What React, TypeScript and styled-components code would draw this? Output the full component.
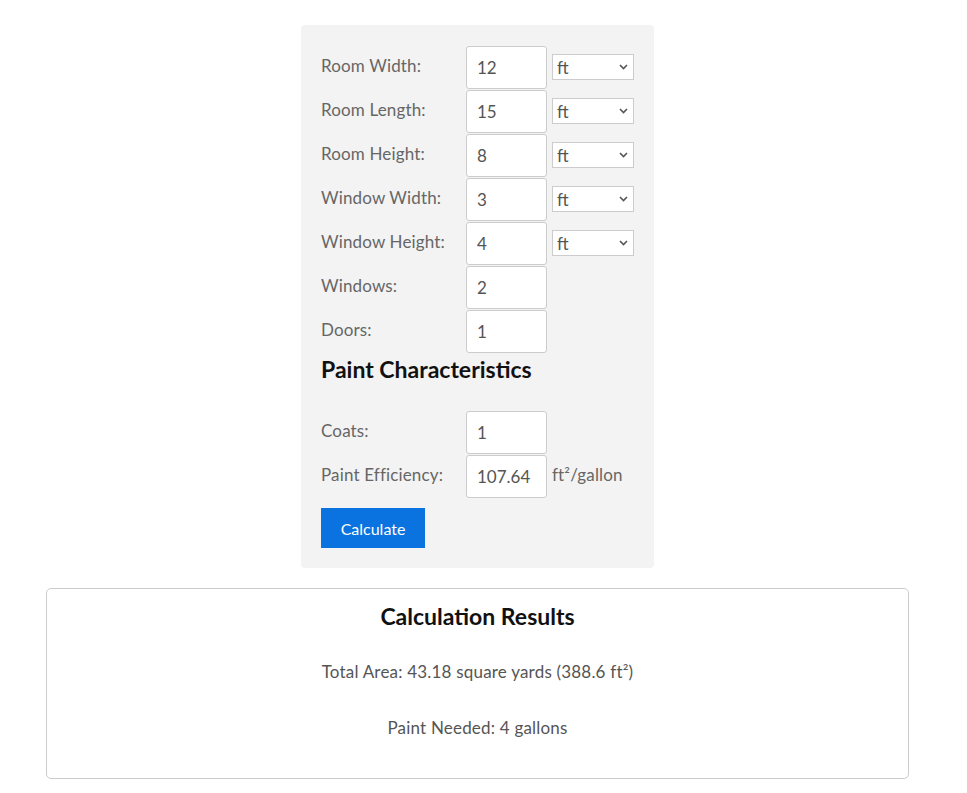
import React, { useState } from "react"
import styled, { createGlobalStyle } from "styled-components"

const GlobalStyle = createGlobalStyle`
  body {
    margin: 0;
    background: #fff;
    font-family: Lato, "Open Sans", sans-serif;
  }
`

const Page = styled.div`
  width: 955px;
  padding: 25px 0 14px;
  display: flex;
  flex-direction: column;
  align-items: center;
  gap: 20px;
`

const Panel = styled.div`
  width: 353px;
  box-sizing: border-box;
  padding: 20px;
  background: #f3f3f3;
  border-radius: 4px;
`

const Row = styled.div`
  display: flex;
  align-items: center;
  height: 44px;
`

const Label = styled.label`
  width: 145px;
  flex-shrink: 0;
  font-size: 17px;
  letter-spacing: 0.15px;
  line-height: 22px;
  color: #666;
  margin-top: -3px;
`

const NumInput = styled.input`
  width: 81px;
  height: 43px;
  box-sizing: border-box;
  padding: 0 10px;
  border: 1px solid #ccc;
  border-radius: 3px;
  background: #fff;
  font-family: inherit;
  font-size: 17px;
  color: #555;
  outline: none;
`

const SelectWrap = styled.div`
  position: relative;
  margin-left: 5px;
  width: 82px;
  height: 26px;
`

const UnitSelect = styled.select`
  appearance: none;
  width: 100%;
  height: 100%;
  box-sizing: border-box;
  border: 1px solid #ccc;
  border-radius: 0;
  background: #fff;
  padding: 0 4px;
  font-family: inherit;
  font-size: 17px;
  color: #555;
  outline: none;
`

const Chevron = styled.svg`
  position: absolute;
  right: 6px;
  top: 10px;
  pointer-events: none;
`

const Unit = styled.span`
  margin-left: 5px;
  font-size: 17px;
  letter-spacing: 0.15px;
  color: #666;
  margin-top: -3px;
`

const Heading = styled.h3`
  margin: 1px 0 26px;
  height: 30px;
  line-height: 30px;
  font-size: 23px;
  font-weight: 700;
  color: #111;
`

const Button = styled.button`
  margin-top: 10px;
  width: 104px;
  height: 40px;
  border: none;
  background: #0a73e0;
  color: #fff;
  font-family: inherit;
  font-size: 16px;
  cursor: pointer;
`

const Results = styled.div`
  align-self: stretch;
  margin: 0 46px;
  height: 191px;
  box-sizing: border-box;
  border: 1px solid #ccc;
  border-radius: 5px;
  display: flex;
  flex-direction: column;
  align-items: center;
  padding-top: 12px;
`

const ResultsTitle = styled.h3`
  margin: 0 0 30px;
  line-height: 30px;
  font-size: 23px;
  font-weight: 700;
  color: #111;
`

const ResultLine = styled.p`
  margin: 0 0 34px;
  line-height: 22px;
  font-size: 17px;
  letter-spacing: 0.2px;
  color: #555;
`

const dimRows = [
  { label: "Room Width:", value: "12" },
  { label: "Room Length:", value: "15" },
  { label: "Room Height:", value: "8" },
  { label: "Window Width:", value: "3" },
  { label: "Window Height:", value: "4" },
]

const UnitPicker = () => (
  <SelectWrap>
    <UnitSelect defaultValue="ft">
      <option value="ft">ft</option>
      <option value="m">m</option>
      <option value="in">in</option>
    </UnitSelect>
    <Chevron width="9" height="6" viewBox="0 0 9 6">
      <path d="M1 1l3.5 3.5L8 1" fill="none" stroke="#555" strokeWidth="1.6" />
    </Chevron>
  </SelectWrap>
)

const App = () => {
  const [vals] = useState({ windows: "2", doors: "1", coats: "1", eff: "107.64" })

  return (
    <>
      <GlobalStyle />
      <Page>
        <Panel>
          {dimRows.map(r => (
            <Row key={r.label}>
              <Label>{r.label}</Label>
              <NumInput defaultValue={r.value} />
              <UnitPicker />
            </Row>
          ))}
          <Row>
            <Label>Windows:</Label>
            <NumInput defaultValue={vals.windows} />
          </Row>
          <Row>
            <Label>Doors:</Label>
            <NumInput defaultValue={vals.doors} />
          </Row>
          <Heading>Paint Characteristics</Heading>
          <Row>
            <Label>Coats:</Label>
            <NumInput defaultValue={vals.coats} />
          </Row>
          <Row>
            <Label>Paint Efficiency:</Label>
            <NumInput defaultValue={vals.eff} />
            <Unit>ft²/gallon</Unit>
          </Row>
          <Button>Calculate</Button>
        </Panel>
        <Results>
          <ResultsTitle>Calculation Results</ResultsTitle>
          <ResultLine>Total Area: 43.18 square yards (388.6 ft²)</ResultLine>
          <ResultLine>Paint Needed: 4 gallons</ResultLine>
        </Results>
      </Page>
    </>
  )
}

export default App
